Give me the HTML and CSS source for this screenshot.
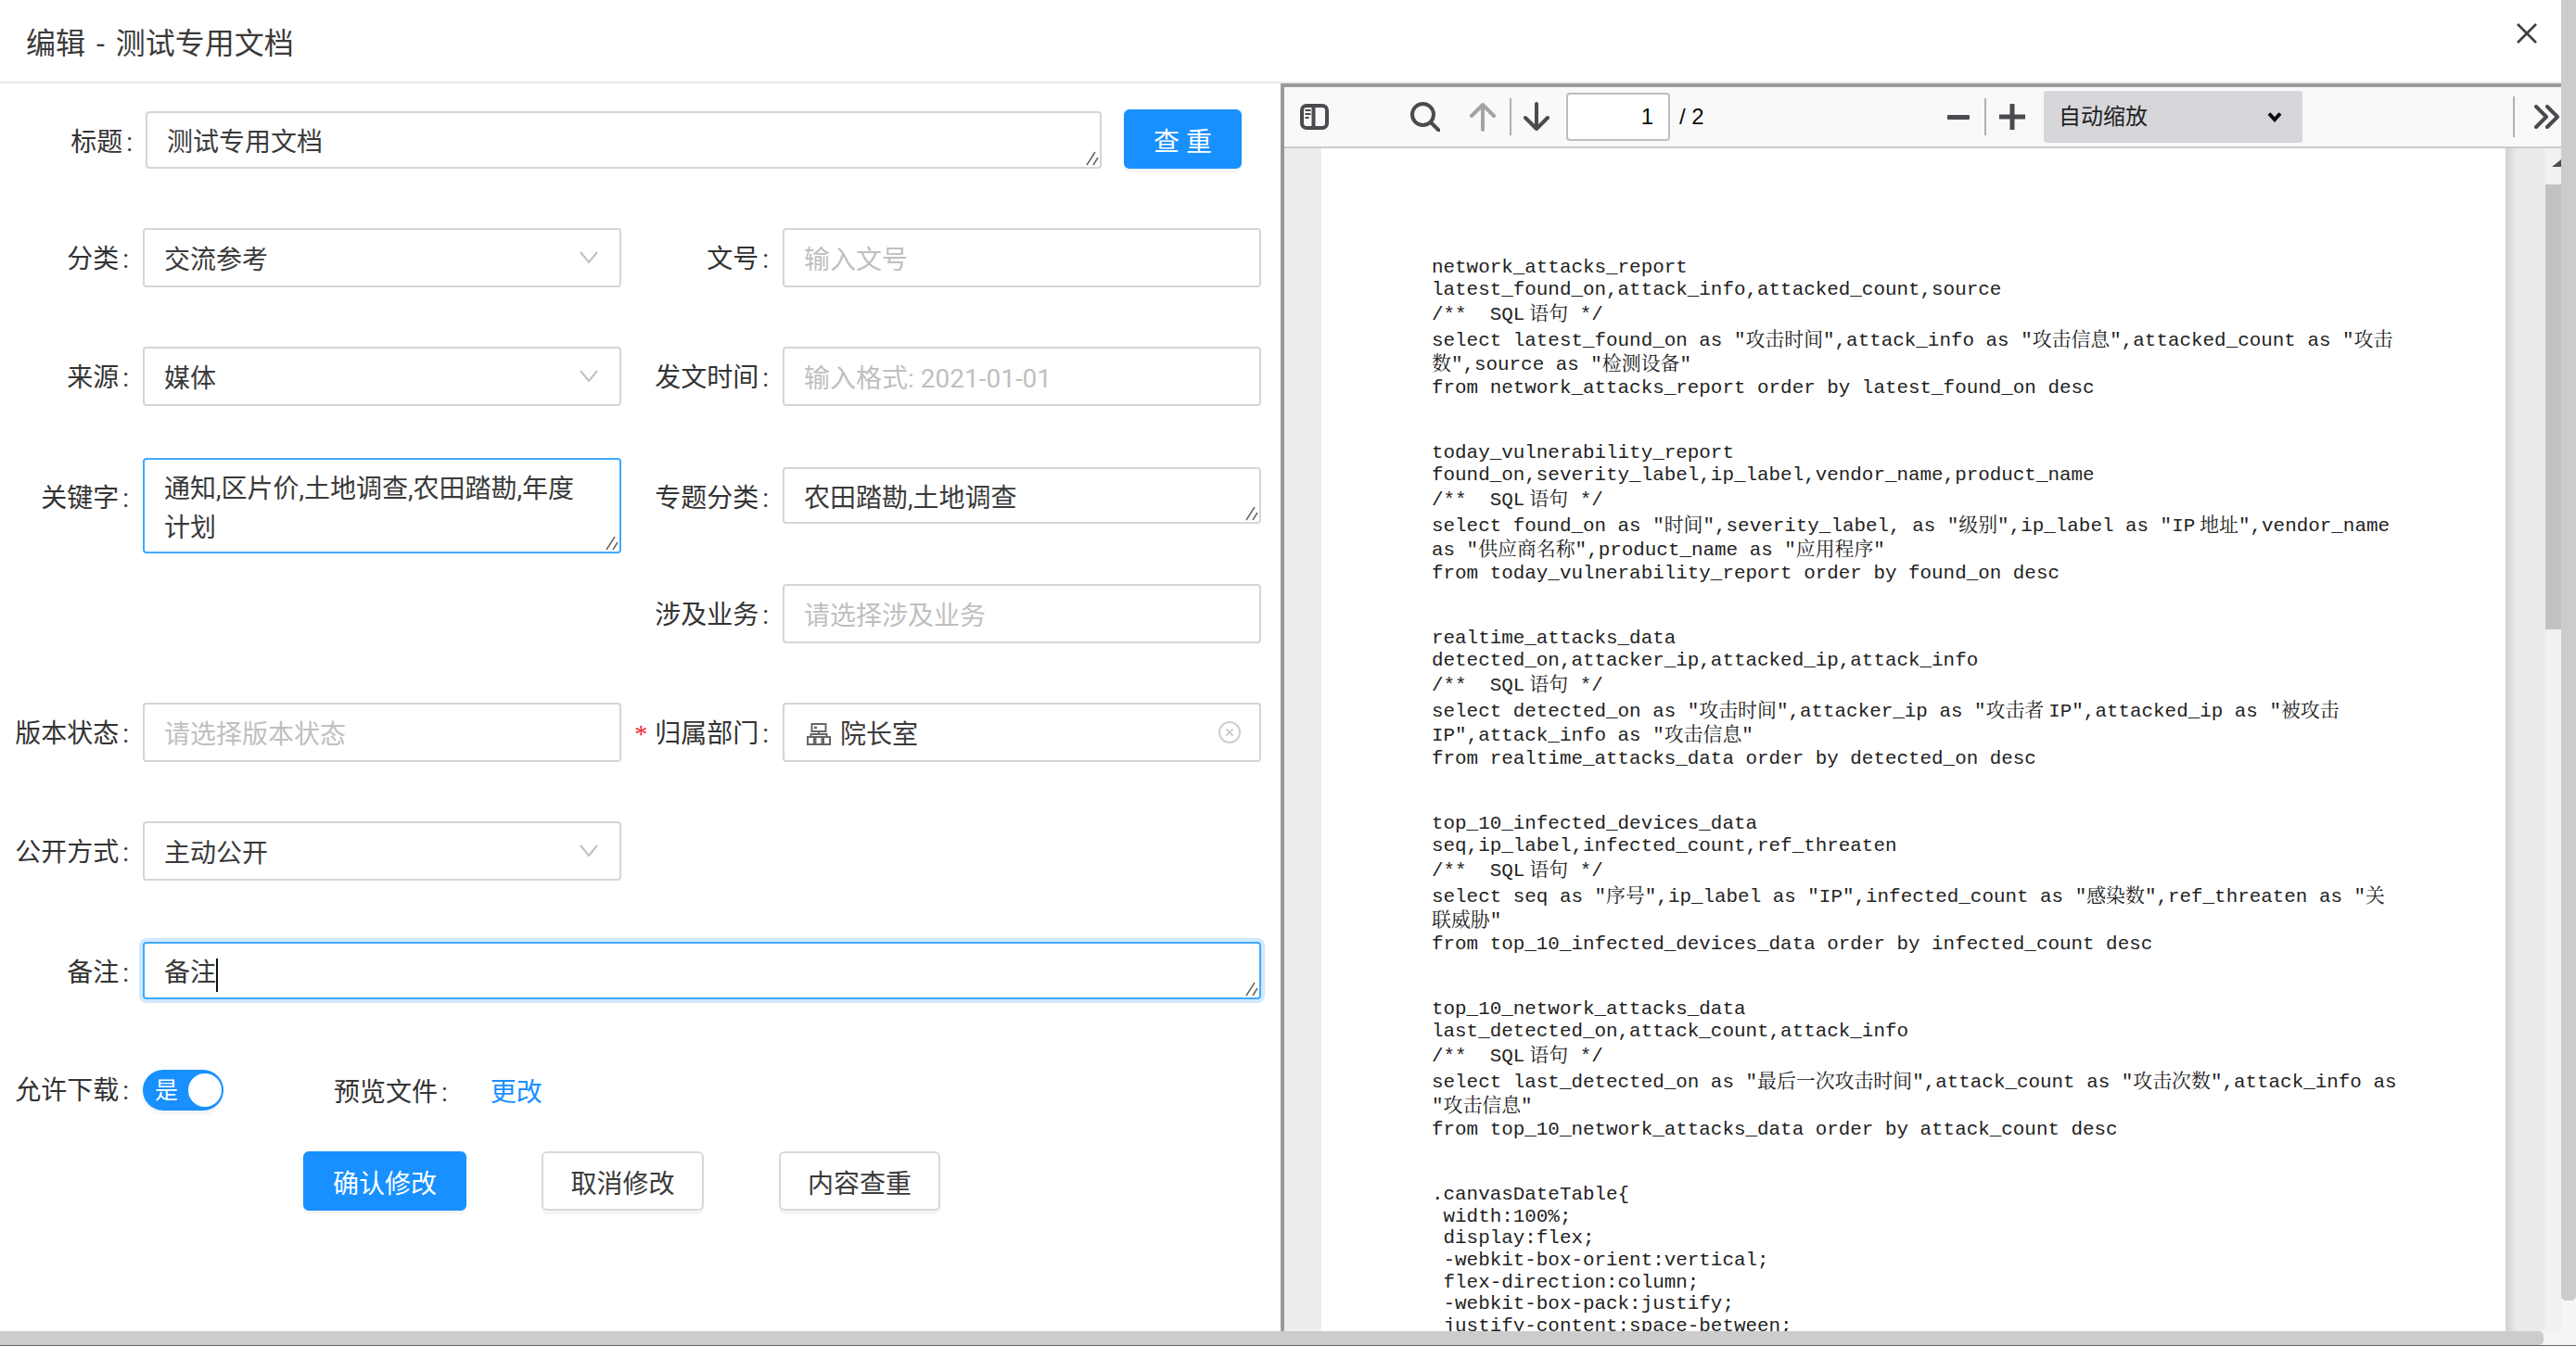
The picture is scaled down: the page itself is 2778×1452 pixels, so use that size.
FILE: index.html
```html
<!DOCTYPE html>
<html lang="zh-CN">
<head>
<meta charset="utf-8">
<title>编辑 - 测试专用文档</title>
<link rel="stylesheet" href="styles.css">
</head>
<body>
<div class="app">
  <div class="top">
    <div class="main">
      <header class="head">
        <h1 class="title">编辑 - 测试专用文档</h1>
        <svg class="close" width="24" height="24" viewBox="0 0 24 24"><path d="M2 2L22 22M22 2L2 22"/></svg>
      </header>
      <div class="content">
        <form class="form">
          <div class="label title-label">标题<span class="colon">:</span></div>
          <div class="title-row">
            <div class="field area title-area">测试专用文档<svg class="grip" width="14" height="16" viewBox="0 0 14 16"><path d="M1 15L10 1M8 15L13 7"/></svg></div>
            <div class="btn primary search-btn">查 重</div>
          </div>

          <div class="label">分类<span class="colon">:</span></div>
          <div class="field">交流参考<svg class="chev" width="20" height="14" viewBox="0 0 20 14"><path d="M1 1L10 12L19 1"/></svg></div>
          <div class="label">文号<span class="colon">:</span></div>
          <div class="field ph">输入文号</div>

          <div class="label">来源<span class="colon">:</span></div>
          <div class="field">媒体<svg class="chev" width="20" height="14" viewBox="0 0 20 14"><path d="M1 1L10 12L19 1"/></svg></div>
          <div class="label">发文时间<span class="colon">:</span></div>
          <div class="field ph">输入格式: 2021-01-01</div>

          <div class="label">关键字<span class="colon">:</span></div>
          <div class="field area focus kw">通知,区片价,土地调查,农田踏勘,年度<br>计划<svg class="grip" width="14" height="16" viewBox="0 0 14 16"><path d="M1 15L10 1M8 15L13 7"/></svg></div>
          <div class="label">专题分类<span class="colon">:</span></div>
          <div class="field area short">农田踏勘,土地调查<svg class="grip" width="14" height="16" viewBox="0 0 14 16"><path d="M1 15L10 1M8 15L13 7"/></svg></div>

          <div class="label c3">涉及业务<span class="colon">:</span></div>
          <div class="field ph">请选择涉及业务</div>

          <div class="label">版本状态<span class="colon">:</span></div>
          <div class="field ph">请选择版本状态</div>
          <div class="label"><span class="req">*</span>归属部门<span class="colon">:</span></div>
          <div class="field">
            <svg class="tree" width="26" height="24" viewBox="0 0 26 24"><path d="M5.500 1h15v8h-15zM13 9v3M4.500 15v-3h17v3M1 15h7v8H1zM9.500 15h7v8h-7zM18 15h7v8h-7z"/><path class="tree-dot" d="M8 5h3"/></svg><span class="tree-text">院长室</span>
            <svg class="clear" width="24" height="24" viewBox="0 0 24 24"><circle cx="12" cy="12" r="11"/><path class="clear-x" d="M8.500 8.500L15.500 15.500M15.500 8.500L8.500 15.500"/></svg>
          </div>

          <div class="label">公开方式<span class="colon">:</span></div>
          <div class="field">主动公开<svg class="chev" width="20" height="14" viewBox="0 0 20 14"><path d="M1 1L10 12L19 1"/></svg></div>
          <div class="filler"></div>

          <div class="label">备注<span class="colon">:</span></div>
          <div class="field area focus ring wide">备注<span class="caret"></span><svg class="grip" width="14" height="16" viewBox="0 0 14 16"><path d="M1 15L10 1M8 15L13 7"/></svg></div>

          <div class="label toggle-label">允许下载<span class="colon">:</span></div>
          <div class="toggle-row">
            <div class="switch"><span class="switch-text">是</span><span class="knob"></span></div>
            <span class="preview">预览文件<span class="colon">:</span></span>
            <span class="link">更改</span>
          </div>

          <div class="actions">
            <div class="btn primary confirm">确认修改</div>
            <div class="btn cancel">取消修改</div>
            <div class="btn">内容查重</div>
          </div>
        </form>

        <section class="viewer">
          <div class="toolbar">
            <svg class="ic sidebar" width="31" height="28" viewBox="0 0 31 28"><rect x="2" y="2" width="27" height="24" rx="5"/><path d="M14.500 2V26"/><path class="thin" d="M5.500 7H11.500M5.500 11H11.500M5.500 15H9.500"/></svg>
            <svg class="ic search" width="32" height="32" viewBox="0 0 32 32"><circle cx="13.500" cy="13.500" r="11.500"/><path d="M22 22L30.500 30.500"/></svg>
            <svg class="ic up off" width="28" height="32" viewBox="0 0 28 32"><path d="M14 30V3M2 15L14 3L26 15"/></svg>
            <span class="sep s1"></span>
            <svg class="ic down" width="28" height="32" viewBox="0 0 28 32"><path d="M14 2V29M2 17L14 29L26 17"/></svg>
            <div class="page-input">1</div>
            <span class="page-total">/ 2</span>
            <span class="minus"></span>
            <span class="sep s2"></span>
            <svg class="plus" width="28" height="28" viewBox="0 0 28 28"><path d="M0 14H28M14 0V28"/></svg>
            <div class="zoom-select">自动缩放<svg class="zoom-chev" width="18" height="12" viewBox="0 0 18 12"><path d="M3 2.500L9 9L15 2.500"/></svg></div>
            <span class="sep s3"></span>
            <svg class="ic more" width="27" height="26" viewBox="0 0 27 26"><path d="M2 2L13 13L2 24M14 2L25 13L14 24"/></svg>
          </div>
          <div class="canvas">
            <div class="page">
              <div class="sql">
                <div>network_attacks_report</div>
                <div>latest_found_on,attack_info,attacked_count,source</div>
                <div>/**  SQL<span class="gap">语句</span> */</div>
                <div>select latest_found_on as "攻击时间",attack_info as "攻击信息",attacked_count as "攻击</div>
                <div>数",source as "检测设备"</div>
                <div>from network_attacks_report order by latest_found_on desc</div>
              </div>
              <div class="sql">
                <div>today_vulnerability_report</div>
                <div>found_on,severity_label,ip_label,vendor_name,product_name</div>
                <div>/**  SQL<span class="gap">语句</span> */</div>
                <div>select found_on as "时间",severity_label, as "级别",ip_label as "IP<span class="gap">地址</span>",vendor_name</div>
                <div>as "供应商名称",product_name as "应用程序"</div>
                <div>from today_vulnerability_report order by found_on desc</div>
              </div>
              <div class="sql">
                <div>realtime_attacks_data</div>
                <div>detected_on,attacker_ip,attacked_ip,attack_info</div>
                <div>/**  SQL<span class="gap">语句</span> */</div>
                <div>select detected_on as "攻击时间",attacker_ip as "攻击者<span class="gap">IP</span>",attacked_ip as "被攻击</div>
                <div>IP",attack_info as "攻击信息"</div>
                <div>from realtime_attacks_data order by detected_on desc</div>
              </div>
              <div class="sql">
                <div>top_10_infected_devices_data</div>
                <div>seq,ip_label,infected_count,ref_threaten</div>
                <div>/**  SQL<span class="gap">语句</span> */</div>
                <div>select seq as "序号",ip_label as "IP",infected_count as "感染数",ref_threaten as "关</div>
                <div>联威胁"</div>
                <div>from top_10_infected_devices_data order by infected_count desc</div>
              </div>
              <div class="sql">
                <div>top_10_network_attacks_data</div>
                <div>last_detected_on,attack_count,attack_info</div>
                <div>/**  SQL<span class="gap">语句</span> */</div>
                <div>select last_detected_on as "最后一次攻击时间",attack_count as "攻击次数",attack_info as</div>
                <div>"攻击信息"</div>
                <div>from top_10_network_attacks_data order by attack_count desc</div>
              </div>
              <div class="css">
                <div>.canvasDateTable{</div>
                <div> width:100%;</div>
                <div> display:flex;</div>
                <div> -webkit-box-orient:vertical;</div>
                <div> flex-direction:column;</div>
                <div> -webkit-box-pack:justify;</div>
                <div> justify-content:space-between;</div>
              </div>
            </div>
            <div class="page-side"></div>
            <div class="inner-bar"><span class="arrow"></span><span class="inner-thumb"></span></div>
          </div>
        </section>
      </div>
    </div>
    <div class="vbar"><span class="vthumb"></span></div>
  </div>
  <div class="hbar"><span class="hthumb"></span></div>
</div>
</body>
</html>
```
FILE: styles.css
```css
* { box-sizing: border-box; }
html, body { margin: 0; height: 100%; overflow: hidden; background: #fff; }
body { font-family: Roboto, "Noto Sans CJK SC", sans-serif; color: #333; font-size: 28px; }

.app { display: flex; flex-direction: column; height: 1452px; }
.top { display: flex; flex: 1; min-height: 0; }
.main { flex: 1; min-width: 0; display: flex; flex-direction: column; }

.head { height: 90px; flex: none; display: flex; align-items: flex-start; justify-content: space-between; padding: 25px 25px 0 28px; border-bottom: 2px solid #e8e8e8; }
.title { margin: 0; font-size: 32px; font-weight: 400; line-height: 44px; color: #3a3a3a; word-spacing: 4px; }
.close { fill: none; stroke: #3f3f3f; stroke-width: 2.600; margin-top: -1px; }

.content { flex: 1; min-height: 0; display: flex; }

.form { width: 1381px; flex: none; padding-top: 30px; display: grid; grid-template-columns: 154px 516px 174px 516px; grid-template-rows: 126px 128px 130px 126px 128px 128px 130px 138px 88px auto; align-items: start; }
.label { line-height: 67px; text-align: right; padding-right: 15px; white-space: nowrap; color: #333; }
.title-label { padding-right: 11px; }
.colon { margin-left: 4px; }
.c3 { grid-column: 3; }
.filler { grid-column: span 2; }
.req { color: #f5222d; margin-right: 8px; font-family: "Liberation Serif", serif; }

.field { position: relative; height: 64px; border: 2px solid #d3d5da; border-radius: 4px; padding: 0 21px; line-height: 65px; color: #3a3a3a; background: #fff; white-space: nowrap; }
.ph { color: #bfbfbf; }
.area { height: 62px; line-height: 63px; }
.short { height: 61px; }
.kw { height: 103px; margin-top: -10px; line-height: 42px; padding-top: 11px; }
.focus { border-color: #40a9ff; }
.ring { box-shadow: 0 0 0 4px rgba(24, 144, 255, .2); }
.wide { grid-column: span 3; width: 1206px; }
.caret { display: inline-block; width: 2px; height: 36px; background: #111; vertical-align: middle; }

.grip { position: absolute; right: 1px; bottom: 1px; fill: none; stroke: #666; stroke-width: 1.500; }
.chev { position: absolute; right: 23px; top: 23px; fill: none; stroke: #bfbfbf; stroke-width: 2; }
.tree { fill: none; stroke: #666; stroke-width: 2; vertical-align: -2px; margin-left: 3px; }
.tree-dot { stroke-width: 2.500; }
.tree-text { margin-left: 10px; }
.clear { position: absolute; right: 20px; top: 18px; fill: none; stroke: #cfcfcf; stroke-width: 2; }
.clear-x { stroke: #bfbfbf; stroke-width: 1.500; }

.title-row { grid-column: span 3; display: flex; gap: 24px; padding-left: 3px; align-items: flex-start; }
.title-area { width: 1031px; }

.btn { display: flex; align-items: center; justify-content: center; width: 174px; height: 64px; border: 2px solid #d9d9d9; border-radius: 6px; background: #fff; color: #3a3a3a; box-shadow: 0 4px 0 rgba(0, 0, 0, .04); padding-top: 1px; }
.primary { background: #1890ff; border-color: #1890ff; color: #fff; }
.confirm { width: 176px; }
.cancel { width: 175px; }
.search-btn { width: 127px; margin-top: -2px; }

.toggle-label { line-height: 46px; }
.toggle-row { grid-column: span 3; display: flex; align-items: center; height: 44px; }
.switch { position: relative; width: 87px; height: 44px; border-radius: 22px; background: #1890ff; box-shadow: 0 4px 4px rgba(0, 0, 0, .05); flex: none; }
.switch-text { position: absolute; left: 13px; top: 1px; line-height: 44px; font-size: 25px; color: #fff; }
.knob { position: absolute; right: 2px; top: 4px; width: 36px; height: 36px; border-radius: 50%; background: #fff; }
.preview { margin-left: 119px; white-space: nowrap; }
.link { margin-left: 46px; color: #1890ff; }

.actions { grid-column: 1 / -1; display: flex; gap: 81px; padding-left: 327px; }

.viewer { flex: 1; min-width: 0; display: flex; flex-direction: column; border-left: 4px solid #999; border-top: 4px solid #999; }
.toolbar { height: 66px; flex: none; display: flex; align-items: center; padding-left: 17px; background: #f9f9fa; border-bottom: 2px solid #ccc; color: #0c0c0d; font-family: "Liberation Sans", "Noto Sans CJK SC", sans-serif; }
.ic { flex: none; fill: none; stroke: #4a4a4f; stroke-width: 4; stroke-linecap: round; stroke-linejoin: round; }
.thin { stroke-width: 2; stroke-linecap: butt; }
.off { stroke: #a3a3a6; }
.search { margin-left: 88px; }
.up { margin-left: 32px; }
.sep { flex: none; width: 2px; height: 40px; background: #b1b1b1; }
.s1 { margin-left: 15px; }
.down { margin-left: 13px; }
.page-input { flex: none; margin-left: 18px; width: 112px; height: 52px; border: 2px solid #bdbdbf; border-radius: 4px; background: #fff; text-align: right; padding-right: 16px; font-size: 24px; line-height: 48px; color: #0c0c0d; }
.page-total { flex: none; width: 27px; margin-left: 10px; font-size: 24px; white-space: nowrap; }
.minus { flex: none; margin-left: 262px; width: 24px; height: 5px; background: #4a4a4f; border-radius: 1px; }
.s2 { margin-left: 16px; }
.plus { flex: none; margin-left: 14px; fill: none; stroke: #4a4a4f; stroke-width: 5; }
.zoom-select { position: relative; flex: none; margin-left: 20px; width: 279px; height: 56px; border-radius: 3px; background: #d7d7db; padding-left: 16px; font-size: 24px; line-height: 56px; color: #222; }
.zoom-chev { position: absolute; right: 21px; top: 22px; fill: none; stroke: #0c0c0d; stroke-width: 4; }
.s3 { margin-left: 227px; height: 44px; }
.more { margin-left: 21px; }

.canvas { flex: 1; min-height: 0; display: flex; overflow: hidden; background: #ededf0; padding-left: 40px; }
.page { flex: none; width: 1277px; background: #fff; padding: 117px 0 0 119px; font-family: "Liberation Mono", "Noto Serif CJK SC", "Noto Sans CJK SC", monospace; font-size: 20.900px; color: #222; overflow: hidden; }
.sql div, .css div { height: 24px; line-height: 24px; white-space: pre; }
.gap { margin-left: 5px; }
.sql div:nth-child(2) { height: 27px; }
.sql div:nth-child(3) { height: 28px; }
.sql div:nth-child(4) { height: 26px; }
.sql div:nth-child(5) { height: 25px; }
.sql div:nth-child(6) { height: 70px; }
.css div { height: 23.700px; }
.page-side { flex: none; width: 43px; background: linear-gradient(90deg, #d0d0d2, #ebebed 12px); }
.inner-bar { position: relative; flex: none; width: 17px; background: #f1f1f1; }
.arrow { position: absolute; left: 7px; top: 12px; border-left: 10px solid transparent; border-bottom: 8px solid #505050; }
.inner-thumb { position: absolute; left: 0; right: 0; top: 39px; height: 480px; background: #c1c1c1; }

.vbar { position: relative; width: 16px; flex: none; background: #f5f5f5; }
.vthumb { position: absolute; left: 0; right: 0; top: 0; height: 1403px; background: #ccc; border-radius: 0 0 5px 5px; }
.hbar { position: relative; height: 16px; flex: none; background: #f5f5f5; border-bottom: 1px solid #666; }
.hthumb { position: absolute; left: 0; top: 0; bottom: 0; width: 2743px; background: #ccc; border-radius: 0 5px 5px 0; }
```
